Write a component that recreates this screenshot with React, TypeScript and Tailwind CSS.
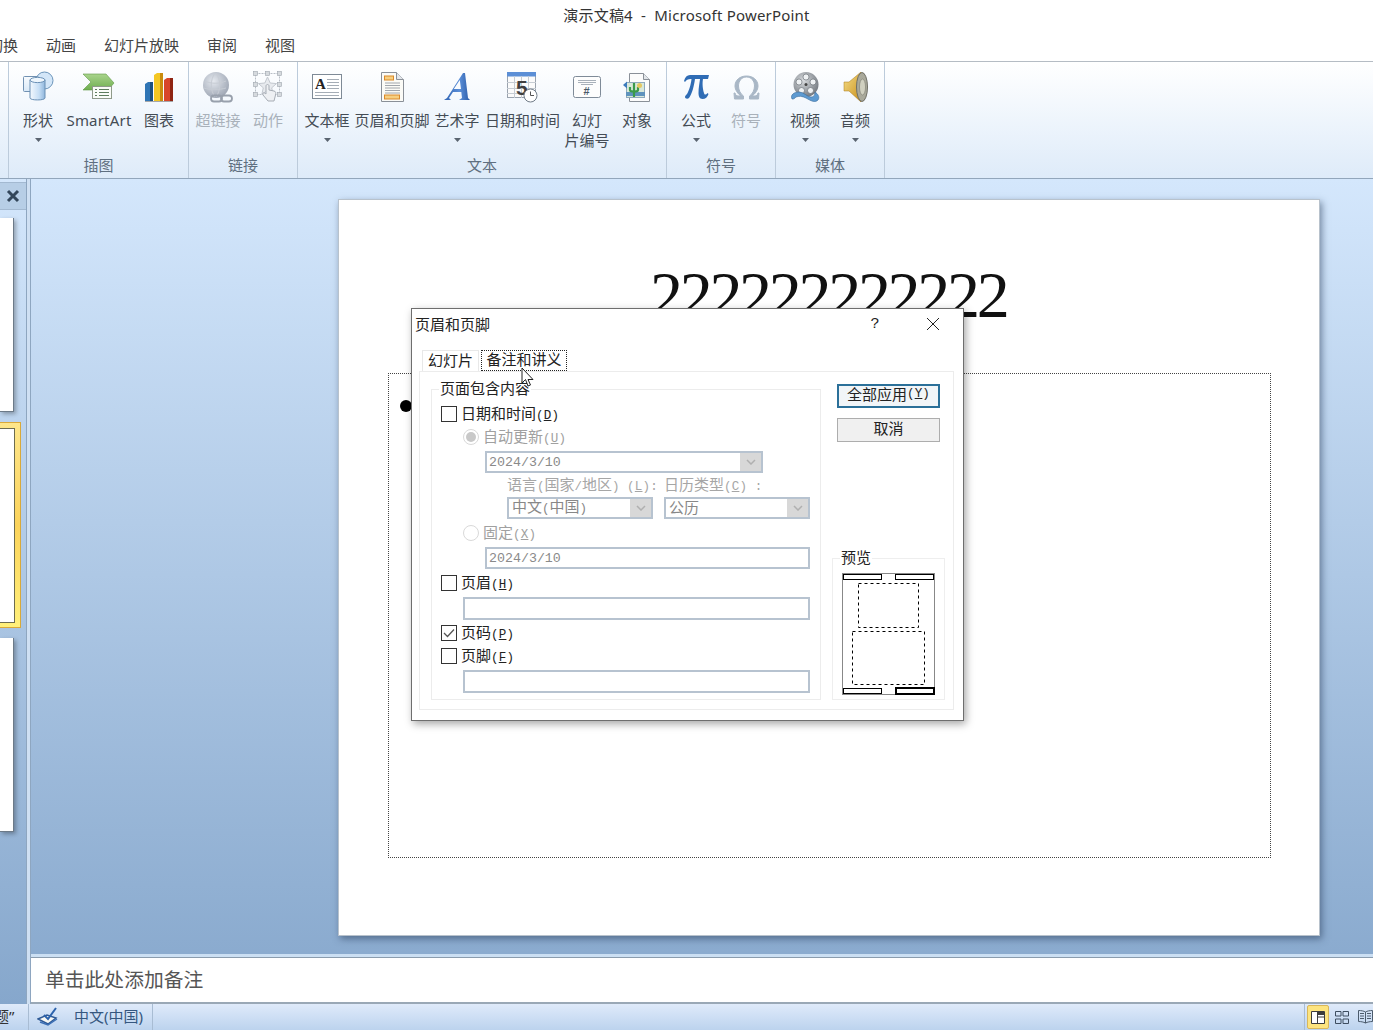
import React from "react";

const Caret = () => (
  <svg width="7" height="4" viewBox="0 0 7 4"><path d="M0 0h7L3.500 4z" fill="#5a6470" /></svg>
);

const IconShapes = () => (
  <svg width="32" height="32" viewBox="0 0 32 32">
    <defs>
      <linearGradient id="cyl" x1="0" x2="1" y1="0" y2="0"><stop offset="0" stopColor="#f4f9fe" /><stop offset="0.6" stopColor="#c6def5" /><stop offset="1" stopColor="#8fb6dc" /></linearGradient>
      <linearGradient id="sq" x1="0" x2="0" y1="0" y2="1"><stop offset="0" stopColor="#f8fbfe" /><stop offset="1" stopColor="#d8e8f7" /></linearGradient>
    </defs>
    <circle cx="22.500" cy="9.500" r="8.500" fill="#d3e6f8" stroke="#6a94ba" />
    <rect x="1.500" y="5.500" width="15" height="15" rx="1" fill="url(#sq)" stroke="#7191b2" />
    <path d="M8 9v18c0 2.600 15 2.600 15 0V9z" fill="url(#cyl)" stroke="#6a90b5" />
    <ellipse cx="15.500" cy="9" rx="7.500" ry="2.600" fill="#eef6fd" stroke="#6a90b5" />
  </svg>
);
const IconSmartArt = () => (
  <svg width="32" height="28" viewBox="0 0 32 28">
    <defs><linearGradient id="sm" x1="0" x2="0" y1="0" y2="1"><stop offset="0" stopColor="#a9d48c" /><stop offset="1" stopColor="#6fae50" /></linearGradient></defs>
    <path d="M0 1h23l8 9-6 7H0l8-8z" fill="url(#sm)" stroke="#5f9945" strokeWidth="0.600" />
    <rect x="9.500" y="13.500" width="19" height="12" fill="#fafcf8" stroke="#8f9a8a" />
    <path d="M12 16.500h2M16 16.500h10M12 19.500h2M16 19.500h10M12 22.500h2M16 22.500h10" stroke="#5d7d5d" />
  </svg>
);
const IconChart = () => (
  <svg width="30" height="31" viewBox="0 0 30 31">
    <path d="M1 12l3-2h5v19H1z" fill="#2f75b5" /><path d="M6 10h3v19H6z" fill="#1b4f80" />
    <path d="M10 3l3-2h6v28h-9z" fill="#f3c623" /><path d="M16 1h3v28h-3z" fill="#c98b0d" />
    <path d="M20 8l3-2h6v23h-9z" fill="#d8452a" /><path d="M26 6h3v23h-3z" fill="#8f2412" />
    <path d="M1 29h28v1H1z" fill="#555" opacity="0.500" />
  </svg>
);
const IconLink = () => (
  <svg width="32" height="31" viewBox="0 0 32 31">
    <defs><radialGradient id="glb" cx="0.400" cy="0.350" r="0.700"><stop offset="0" stopColor="#e4e8ee" /><stop offset="1" stopColor="#9ca4b2" /></radialGradient></defs>
    <circle cx="14" cy="13" r="13" fill="url(#glb)" />
    <path d="M3 9c6 3 14 3 21 0M2 16c6 2 15 2 22 0M13 1c-5 7-5 17 0 24M14 1c5 7 5 17 0 24" stroke="#c7ccd4" fill="none" />
    <rect x="9" y="23.500" width="11" height="6" rx="3" fill="none" stroke="#98a0ac" strokeWidth="1.800" />
    <rect x="19" y="23.500" width="11" height="6" rx="3" fill="none" stroke="#98a0ac" strokeWidth="1.800" />
  </svg>
);
const IconAction = () => (
  <svg width="30" height="32" viewBox="0 0 30 32">
    <rect x="2.500" y="2.500" width="24" height="21" fill="none" stroke="#b8bec6" strokeDasharray="2 1" />
    {[[2, 2], [14, 2], [26, 2], [2, 13], [26, 13], [2, 23], [26, 23]].map(([x, y], i) => (
      <rect key={i} x={x - 1.500} y={y - 1.500} width="4" height="4" fill="#d6dade" stroke="#9fa6ae" strokeWidth="0.600" />
    ))}
    <path d="M14.500 6l2.700 6 6.300.6-4.800 4.200 1.400 6.200-5.600-3.300L8.900 23l1.400-6.200L5.500 12.600l6.300-.6z" fill="#e7eaee" stroke="#c3c8cf" />
    <path d="M13 20v-5c0-2 3-2 3 0v4l5 1c2 .5 2 2 1.500 4L21 30h-6l-5-6c-1-2 1-3 3-1z" fill="#eef0f3" stroke="#a7adb5" />
  </svg>
);
const IconTextBox = () => (
  <svg width="31" height="26" viewBox="0 0 31 26">
    <rect x="0.500" y="0.500" width="29" height="24" fill="#fff" stroke="#7e8a96" />
    <text x="3" y="15" fontFamily="Liberation Serif" fontSize="15" fontWeight="700" fill="#222">A</text>
    <path d="M15 5.500h12M15 8.500h12M15 11.500h12M15 14.500h12M3 18.500h24M3 21.500h24" stroke="#a5adb6" />
  </svg>
);
const IconHeaderFooter = () => (
  <svg width="23" height="30" viewBox="0 0 23 30">
    <path d="M.5.500h15l7 7v22H.5z" fill="#fbfbf7" stroke="#8a9098" />
    <path d="M15.500.500v7h7" fill="#e3e6ea" stroke="#8a9098" />
    <rect x="3.500" y="4" width="9" height="4" fill="#f7cf7f" stroke="#d9892c" />
    <path d="M4 11h15M4 13.500h15M4 16h15M4 18.500h15M4 21h15" stroke="#a1a6ac" />
    <rect x="3.500" y="23" width="15" height="4" fill="#f7cf7f" stroke="#d9892c" />
  </svg>
);
const IconWordArt = () => (
  <svg width="28" height="30" viewBox="0 0 28 30">
    <defs><linearGradient id="wa" x1="0" x2="1" y1="0" y2="0"><stop offset="0" stopColor="#2f63b3" /><stop offset="0.600" stopColor="#5b8fd8" /><stop offset="1" stopColor="#2b5ca8" /></linearGradient></defs>
    <path d="M20 1h2l3 25 2 2H16l3-2-.7-6H10l-4 6 2 2H1l3-2zM18 17l-1.200-9-6 9z" fill="url(#wa)" fillRule="evenodd" />
  </svg>
);
const IconDate = () => (
  <svg width="31" height="31" viewBox="0 0 31 31">
    <rect x="0.500" y="0.500" width="28" height="25" fill="#fbfbfb" stroke="#9aa3ae" />
    <rect x="0" y="0" width="29" height="4.500" fill="#5c8fd6" />
    <path d="M0 10.500h29M0 16.500h29M0 21.500h29M7.500 4v22M14.500 4v22M21.500 4v22" stroke="#c6ccd3" />
    <text x="9" y="23" fontFamily="Liberation Sans" fontSize="21" fontWeight="700" fill="#3f3f3f">5</text>
    <circle cx="23.500" cy="23.500" r="6.500" fill="#fff" stroke="#6f7b87" />
    <path d="M23.500 19.500v4h3.500" fill="none" stroke="#555" />
  </svg>
);
const IconSlideNo = () => (
  <svg width="29" height="23" viewBox="0 0 29 23">
    <rect x="0.500" y="0.500" width="27" height="21" rx="2" fill="#fdfdfd" stroke="#7f8b98" />
    <path d="M5 4.500h18M5 6.500h18M8 8.500h12" stroke="#a9b1ba" />
    <text x="10.500" y="18.500" fontFamily="Liberation Sans" fontSize="11" fontWeight="700" fill="#4b5a6a">#</text>
  </svg>
);
const IconObject = () => (
  <svg width="28" height="30" viewBox="0 0 28 30">
    <path d="M6.500 1.500h14l6 6v22h-20z" fill="#fcfcfc" stroke="#8a9098" />
    <path d="M20.500 1.500v6h6" fill="#e2e6ea" stroke="#8a9098" />
    <rect x="3.500" y="10.500" width="18" height="15" fill="#d9e8d9" stroke="#8fa9bc" />
    <path d="M3 20h19v4H3z" fill="#5f93bd" />
    <path d="M11 11v14M7 15v3c0 2 8 2 8 0v-3" stroke="#3b9a4a" strokeWidth="2.200" fill="none" />
    <circle cx="16.500" cy="13.500" r="2.500" fill="#e5c861" />
    <path d="M0 13l4-3.500v7z" fill="#3d7bbd" />
  </svg>
);
const IconPi = () => (
  <svg width="27" height="26" viewBox="0 0 27 26">
    <path d="M1 7c1-4 3-6 6-6h19l-1 4h-5c-1 5 0 11 1 14 .5 2 2 2 3.500 0l1 1c-1 3-3 5-6 5-3 0-4-3-4-6 0-5 1-10 1.500-14h-5c-1 7-3 15-6 19-1 1-4 1-4-1 0-1 1-2 2-3 2-3 4-10 4.500-15H8C5 5 3 6 2 8z" fill="#2f6cb5" />
  </svg>
);
const IconOmega = () => (
  <svg width="27" height="25" viewBox="0 0 27 25">
    <path d="M1 18l.5 6h9v-3c-3-2-5-6-5-10 0-5 3-9 8-9s8 4 8 9c0 4-2 8-5 10v3h9l.5-6h-1c-.5 2-1.500 3-3 3h-3c3-2 6-6 6-10 0-6-5-10-11.500-10S2 5 2 11c0 4 3 8 6 10H5c-1.500 0-2.500-1-3-3z" fill="#a9b7c6" stroke="#a9b7c6" />
  </svg>
);
const IconVideo = () => (
  <svg width="31" height="31" viewBox="0 0 31 31">
    <defs><radialGradient id="reel" cx="0.400" cy="0.350" r="0.700"><stop offset="0" stopColor="#d9dcdf" /><stop offset="1" stopColor="#70767d" /></radialGradient></defs>
    <circle cx="16" cy="12.500" r="12.500" fill="url(#reel)" />
    {[[16, 5], [23, 10], [20.500, 18.500], [11.500, 18.500], [9, 10]].map(([x, y], i) => (
      <circle key={i} cx={x} cy={y} r="3" fill="#eef1f3" stroke="#5e646b" strokeWidth="0.600" />
    ))}
    <circle cx="16" cy="12.500" r="1.500" fill="#444" />
    <path d="M2 27c-2-4 2-7 7-7 5 0 8 5 12 5 3 0 4-2 4-5 3 2 5 5 3 8-3 3-7 1-12-2-4-2-7-2-10-1-1 1-2 2-3 2z" fill="#5d9ad1" stroke="#38699b" strokeWidth="0.600" />
  </svg>
);
const IconAudio = () => (
  <svg width="25" height="30" viewBox="0 0 25 30">
    <defs><linearGradient id="spk" x1="0" x2="1" y1="0" y2="1"><stop offset="0" stopColor="#f5de88" /><stop offset="1" stopColor="#c98f1a" /></linearGradient></defs>
    <path d="M18 0L6 10H1v9h5l12 11z" fill="url(#spk)" stroke="#a97a18" strokeWidth="0.500" />
    <ellipse cx="19" cy="15" rx="5.500" ry="14.500" fill="#a9a99b" stroke="#6f6f66" />
    <ellipse cx="19.500" cy="15" rx="3" ry="8" fill="#d0d0c0" stroke="#7b7b70" strokeWidth="0.600" />
  </svg>
);

type Item = { w: number; icon: React.ReactNode; label: React.ReactNode; caret?: boolean; off?: boolean };

const RibbonItem = ({ w, icon, label, caret, off }: Item) => (
  <div style={{ width: w }} className="flex flex-col items-center">
    <div className="h-[42px] flex items-center justify-center">{icon}</div>
    <div className={`text-[15px] leading-[20px] h-[20px] mt-[2px] whitespace-nowrap ${off ? "text-[#a9b1ba]" : "text-[#444c55]"}`}>{label}</div>
    <div className="h-[20px] flex items-center justify-center">{caret ? <Caret /> : null}</div>
  </div>
);

const Group = ({ w, label, pl = 0, children }: { w: number; label: string; pl?: number; children: React.ReactNode }) => (
  <div style={{ width: w, paddingLeft: pl }} className="h-full border-r border-[#bccbdb] flex flex-col shrink-0">
    <div className="flex h-[84px] mt-[4px]">{children}</div>
    <div className="mt-[5px] h-[20px] leading-[20px] text-[15px] text-center text-[#5f6f80]" style={{ marginLeft: -pl }}>{label}</div>
  </div>
);

const P = ({ c }: { c: string }) => <span className="font-['Liberation_Mono',monospace] text-[12.500px]">{c}</span>;

const M = ({ c }: { c: string }) => (
  <span className="font-['Liberation_Mono',monospace] text-[12.500px] tracking-[0.200px]">(<span className="underline">{c}</span>)</span>
);

const Check = ({ on }: { on?: boolean }) => (
  <div className="w-[16px] h-[16px] border border-[#333] bg-white flex items-center justify-center shrink-0">
    {on ? <svg width="12" height="10" viewBox="0 0 12 10"><path d="M1 5l3.500 3.500L11 1.500" fill="none" stroke="#555" strokeWidth="1.300" /></svg> : null}
  </div>
);

const Radio = ({ on }: { on?: boolean }) => (
  <div className="w-[16px] h-[16px] rounded-full border border-[#d9d9d9] bg-white flex items-center justify-center shrink-0">
    {on ? <div className="w-[10px] h-[10px] rounded-full bg-[#c8c8c8]" /> : null}
  </div>
);

const Chevron = () => (
  <svg width="10" height="6" viewBox="0 0 10 6"><path d="M1 1l4 4 4-4" fill="none" stroke="#b0b0b0" strokeWidth="1.500" /></svg>
);

const Field = ({ w, h = 22, ml, text, combo, cjk }: { w: number; h?: number; ml: number; text?: React.ReactNode; combo?: boolean; cjk?: boolean }) => (
  <div style={{ width: w, height: h, marginLeft: ml }} className="border-2 border-[#b7c3d0] bg-white flex items-center shrink-0">
    <div className={`flex-1 whitespace-nowrap ${cjk ? "pl-[3px] pb-[2px] text-[15px] text-[#888]" : "pl-[2px] pt-[1px] font-['Liberation_Mono',monospace] text-[13.300px] text-[#8a8a8a]"}`}>{text}</div>
    {combo ? <div className="w-[21px] h-full bg-[#d8d8d8] flex items-center justify-center"><Chevron /></div> : null}
  </div>
);

const Row = ({ h = 22, mt = 0, ml, off, children, control }: { h?: number; mt?: number; ml: number; off?: boolean; children: React.ReactNode; control: React.ReactNode }) => (
  <div style={{ height: h, marginTop: mt, marginLeft: ml }} className={`flex items-center text-[15px] whitespace-nowrap ${off ? "text-[#a0a0a0]" : "text-[#222]"}`}>
    {control}
    <span className="ml-[4px]">{children}</span>
  </div>
);

const Preview = () => (
  <svg width="93" height="122" viewBox="0 0 93 122">
    <rect x="0.500" y="0.500" width="92" height="121" fill="#fff" stroke="#888" />
    <rect x="1.500" y="1.500" width="38" height="5" fill="#fff" stroke="#000" />
    <rect x="53.500" y="1.500" width="38" height="5" fill="#fff" stroke="#000" />
    <rect x="16.500" y="10.500" width="60" height="44" fill="none" stroke="#000" strokeDasharray="3 3" />
    <rect x="10.500" y="58.500" width="72" height="53" fill="none" stroke="#000" strokeDasharray="3 3" />
    <rect x="1.500" y="115.500" width="38" height="5" fill="#fff" stroke="#000" />
    <rect x="54" y="115" width="38" height="6" fill="#fff" stroke="#000" strokeWidth="2" />
  </svg>
);

const Dialog = () => (
  <div className="absolute left-[411px] top-[308px] w-[553px] h-[413px] bg-white border border-[#6e6e6e] shadow-[2px_3px_8px_rgba(0,0,0,0.350)] text-[#222]">
    <div className="h-[30px] flex items-center pl-[3px] text-[15px]">
      <span>页眉和页脚</span>
      <span className="ml-auto mt-[3px] w-[20px] text-center font-['Liberation_Mono',monospace] text-[15px]">?</span>
      <svg className="ml-[41px] mr-[23px]" width="14" height="14" viewBox="0 0 14 14"><path d="M1 1l12 12M13 1L1 13" stroke="#222" /></svg>
    </div>
    <div className="h-[32px] pl-[10px] flex items-end text-[15px]">
      <div className="h-[21px] pb-[2px] w-[57px] border border-b-0 border-[#e8e8e8] flex items-center justify-center">幻灯片</div>
      <div className="h-[21px] pb-[2px] w-[86px] ml-[2px] border border-dotted border-[#222] flex items-center justify-center">备注和讲义</div>
    </div>
    <div className="ml-[7px] w-[535px] h-[339px] border border-[#ececec] flex items-start">
      <div className="relative ml-[11px] mt-[17px] w-[390px] h-[311px] border border-[#ececec]">
        <div className="absolute left-[7px] -top-[11px] px-[1px] bg-white text-[15px] leading-[18px]">页面包含内容</div>
        <div className="pt-[13px] flex flex-col">
          <Row ml={9} control={<Check />}>日期和时间<M c="D" /></Row>
          <Row ml={31} mt={1} off control={<Radio on />}>自动更新<M c="U" /></Row>
          <div className="flex mt-[3px]"><Field ml={53} w={278} text="2024/3/10" combo /></div>
          <div className="flex h-[20px] mt-[2px] text-[15px] text-[#a6a6a6] whitespace-pre items-center">
            <span className="ml-[75px] w-[157px]">语言<P c="(" />国家<P c="/" />地区<P c=") " /><M c="L" /><P c=":" /></span>
            <span>日历类型<M c="C" /><P c=" :" /></span>
          </div>
          <div className="flex mt-[2px]">
            <Field ml={75} w={146} text={<>中文<P c="(" />中国<P c=")" /></>} combo cjk />
            <Field ml={11} w={146} text="公历" combo cjk />
          </div>
          <Row ml={31} mt={3} off control={<Radio />}>固定<M c="X" /></Row>
          <div className="flex mt-[3px]"><Field ml={53} w={325} text="2024/3/10" /></div>
          <Row ml={9} mt={3} control={<Check />}>页眉<M c="H" /></Row>
          <div className="flex mt-[3px]"><Field ml={31} w={347} h={23} /></div>
          <Row ml={9} mt={2} control={<Check on />}>页码<M c="P" /></Row>
          <Row ml={9} mt={1} control={<Check />}>页脚<M c="F" /></Row>
          <div className="flex mt-[3px]"><Field ml={31} w={347} h={23} /></div>
        </div>
      </div>
      <div className="ml-[16px] w-[103px] pt-[12px] flex flex-col">
        <div className="h-[24px] pb-[3px] border-2 border-[#2b7099] bg-[#f1f5f8] flex items-center justify-center text-[15px] text-[#222] whitespace-nowrap">全部应用<M c="Y" /></div>
        <div className="h-[24px] pb-[3px] mt-[10px] border border-[#adadad] bg-[#f0f0f0] flex items-center justify-center text-[15px]">取消</div>
        <div className="relative -ml-[5px] mt-[116px] w-[113px] h-[142px] border border-[#eeeeee] pl-[9px] pt-[14px]">
          <div className="absolute left-[7px] -top-[11px] px-[1px] bg-white text-[15px] leading-[18px]">预览</div>
          <Preview />
        </div>
      </div>
    </div>
    <svg className="absolute left-[109px] top-[58px]" width="14" height="22" viewBox="0 0 14 22">
      <path d="M1 1v15l3.500-3.500L7 19l2.500-1-2.500-5.500h5z" fill="#fff" stroke="#222" />
    </svg>
  </div>
);

export default function App() {
  return (
    <div className="relative w-[1373px] h-[1030px] overflow-hidden bg-white flex flex-col font-['Noto_Sans','Noto_Sans_CJK_SC',sans-serif] text-[#333]">
      <div className="h-[31px] flex items-center justify-center text-[15px] text-[#333] tracking-[0.200px]">演示文稿4&nbsp;&nbsp;-&nbsp;&nbsp;Microsoft PowerPoint</div>
      <div className="h-[31px] pb-[1px] border-b border-[#b5bcc4] flex items-center text-[15px] text-[#444] -ml-[12px] gap-[28px]">
        <span>切换</span><span>动画</span><span>幻灯片放映</span><span>审阅</span><span>视图</span>
      </div>
      <div className="h-[117px] shrink-0 bg-gradient-to-b from-white to-[#deebf9] border-b border-[#92a6bb] flex">
        <div className="w-[9px] h-full border-r border-[#bccbdb] shrink-0" />
        <Group w={180} label="插图">
          <RibbonItem w={58} icon={<IconShapes />} label="形状" caret />
          <RibbonItem w={64} icon={<IconSmartArt />} label={<span className="tracking-[0.200px]">SmartArt</span>} />
          <RibbonItem w={56} icon={<IconChart />} label="图表" />
        </Group>
        <Group w={109} pl={4} label="链接">
          <RibbonItem w={50} icon={<IconLink />} label="超链接" off />
          <RibbonItem w={50} icon={<IconAction />} label="动作" off />
        </Group>
        <Group w={369} label="文本">
          <RibbonItem w={58} icon={<IconTextBox />} label="文本框" caret />
          <RibbonItem w={72} icon={<IconHeaderFooter />} label="页眉和页脚" />
          <RibbonItem w={58} icon={<IconWordArt />} label="艺术字" caret />
          <RibbonItem w={73} icon={<IconDate />} label="日期和时间" />
          <div className="w-[56px] flex flex-col items-center">
            <div className="h-[42px] flex items-center justify-center"><IconSlideNo /></div>
            <div className="text-[15px] leading-[20px] mt-[2px] text-[#444c55] text-center">幻灯<br />片编号</div>
          </div>
          <RibbonItem w={44} icon={<IconObject />} label="对象" />
        </Group>
        <Group w={109} pl={4} label="符号">
          <RibbonItem w={50} icon={<IconPi />} label="公式" caret />
          <RibbonItem w={50} icon={<IconOmega />} label="符号" off />
        </Group>
        <Group w={109} pl={4} label="媒体">
          <RibbonItem w={50} icon={<IconVideo />} label="视频" caret />
          <RibbonItem w={50} icon={<IconAudio />} label="音频" caret />
        </Group>
      </div>

      <div className="h-[825px] flex shrink-0 bg-gradient-to-b from-[#d4e7fc] to-[#86a7cc]">
        <div className="w-[27px] shrink-0 flex flex-col border-r border-[#8ea6c0]">
          <div className="h-[28px] mt-[3px] bg-[#b7cee6] border-y border-[#a3b9d1] flex items-center justify-end pr-[6px]">
            <svg width="14" height="14" viewBox="0 0 14 14"><path d="M2 2l10 10M12 2L2 12" stroke="#33465a" strokeWidth="3" /></svg>
          </div>
          <div className="w-[14px] h-[194px] mt-[8px] bg-white border-r border-b border-[#6c7a88] shadow-[2px_2px_4px_rgba(0,0,0,0.300)]" />
          <div className="w-[21px] h-[206px] mt-[10px] bg-gradient-to-b from-[#fde68a] via-[#fbd35a] to-[#fff07a] border border-l-0 border-[#d9a93a] flex items-center">
            <div className="w-[15px] h-[195px] bg-white border-r border-y border-[#6c6c50]" />
          </div>
          <div className="w-[14px] h-[194px] mt-[10px] bg-white border-r border-b border-[#6c7a88] shadow-[2px_2px_4px_rgba(0,0,0,0.300)]" />
        </div>
        <div className="w-[4px] shrink-0 bg-[#cfe0f3] border-r border-[#8ea6c0]" />
        <div className="flex-1 flex flex-col relative">
          <div className="flex-1 relative">
            <div className="absolute left-[307px] top-[20px] w-[982px] h-[737px] bg-white shadow-[2px_3px_7px_rgba(40,60,90,0.550)] border border-[#b8c2cc]">
              <div className="absolute left-[311px] top-[54px] font-['Liberation_Serif',serif] text-[66px] leading-[82px] tracking-[-3.300px] text-[#111] whitespace-nowrap">222222222222</div>
              <div className="absolute left-[49px] top-[173px] w-[883px] h-[485px] border border-dotted border-[#444]">
                <div className="absolute left-[11px] top-[26px] w-[12px] h-[12px] rounded-full bg-black" />
              </div>
            </div>
          </div>
          <div className="h-[4px] bg-[#cbdff3] border-b border-[#8a9cae] shrink-0" />
          <div className="h-[46px] shrink-0 bg-white border-b-[2px] border-[#9aa8b6] flex items-center pl-[14px] text-[19.800px] text-[#555]">单击此处添加备注</div>
        </div>
      </div>

      <div className="flex-1 bg-gradient-to-b from-[#dfeafa] to-[#bcd3ee] flex items-center text-[15px] text-[#35577f]">
        <div className="w-[29px] h-full border-r border-[#a8bcd3] overflow-hidden relative">
          <span className="absolute -left-[6px] top-[1px] text-[#333] whitespace-nowrap">题”</span>
        </div>
        <svg className="ml-[8px]" width="22" height="20" viewBox="0 0 22 20">
          <path d="M1 12l9-4 9 3-8 6z" fill="#f7f7f2" stroke="#2f5a96" strokeWidth="1.500" />
          <path d="M3 15l8 3 9-6" fill="none" stroke="#3b6fb5" strokeWidth="1.500" />
          <path d="M7 8l4 4 8-11" fill="none" stroke="#2c63ad" strokeWidth="2" />
        </svg>
        <span className="ml-[15px] pb-[1px]">中文(中国)</span>
        <div className="ml-[9px] w-px h-full bg-[#a8bcd3]" />
        <div className="ml-auto h-full border-l border-[#a8bcd3] flex items-center pl-[2px]">
          <div className="w-[22px] h-[24px] rounded-[2px] bg-[#fde47f] border border-[#d9b75a] flex items-center justify-center">
            <svg width="14" height="13" viewBox="0 0 14 13"><path d="M.5.500h13v12H.5zM6.500.500v12M6.500 6h7" fill="#fff" stroke="#3c3c3c" /><path d="M7 1h6.500v3H7z" fill="#3c3c3c" /></svg>
          </div>
          <svg className="ml-[6px]" width="14" height="13" viewBox="0 0 14 13"><path d="M.5.500h5.500v4.500H.5zM8 .500h5.500v4.500H8zM.5 8h5.500v4.500H.5zM8 8h5.500v4.500H8z" fill="none" stroke="#3e4e60" /></svg>
          <svg className="ml-[9px]" width="15" height="14" viewBox="0 0 15 14"><path d="M7.500 2C6 1 3 .5 .5 .5v11c2.500 0 5 .5 7 1.500 2-1 4.500-1.500 7-1.500V.5C12 .5 9 1 7.500 2zM7.500 2v11M2 3.500h4M2 6h4M2 8.500h4M9 3.500h4M9 6h4M9 8.500h4" fill="none" stroke="#4b5b6c" /></svg>
        </div>
      </div>

      <Dialog />
    </div>
  );
}
